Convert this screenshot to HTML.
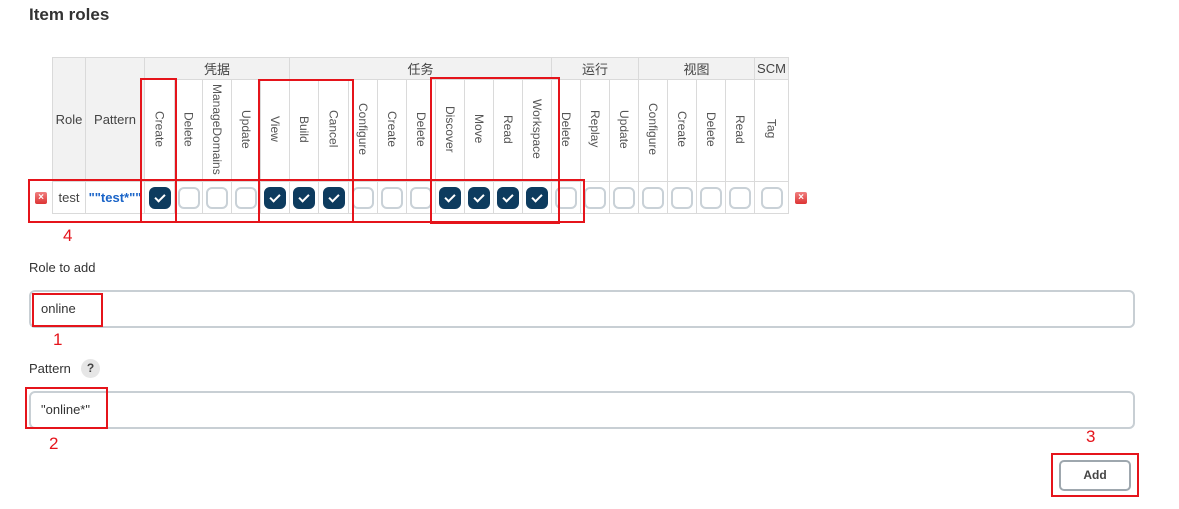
<!DOCTYPE html>
<html><head><meta charset="utf-8"><style>
body{margin:0;width:1179px;height:509px;background:#fff;font-family:"Liberation Sans","Noto Sans CJK SC",sans-serif;color:#333;position:relative;overflow:hidden}
.a{position:absolute}
h1{position:absolute;left:29px;top:5px;margin:0;font-size:17px;font-weight:bold;color:#333}
table{position:absolute;left:52px;top:57px;border-collapse:collapse;table-layout:fixed;font-size:13px;color:#444}
td{border:1px solid #dadada;padding:0;text-align:center;vertical-align:middle;overflow:hidden;white-space:nowrap}
.g{background:#f2f2f2;height:21px}
.rp{background:#f2f2f2}
.v{height:101px;background:#fff}
.v span{writing-mode:vertical-rl;display:inline-block;font-size:12px;color:#555}
.d td{height:31px}
.cb{display:inline-block;width:18px;height:18px;border:2px solid #c9d1d7;border-radius:6px;vertical-align:middle}
.cb.on{background:#0d3b5e;border-color:#0d3b5e;position:relative}
.cb.on:after{content:"";position:absolute;left:6px;top:3px;width:4px;height:8px;border:solid #fff;border-width:0 2px 2px 0;transform:rotate(45deg)}
.x{position:absolute;width:12px;height:12px;background:linear-gradient(#f08080,#d33);border-radius:2px;color:#fff;font-size:10px;line-height:12px;text-align:center;font-weight:bold}
.r{position:absolute;border:2px solid #e5141b;box-sizing:border-box}
.n{position:absolute;color:#e5141b;font-size:17px}
.lbl{position:absolute;left:29px;font-size:13px;color:#333}
.in{position:absolute;left:29px;width:1106px;height:38px;border:2px solid #c8cfd4;border-radius:6px;box-sizing:border-box;font-size:13px;line-height:34px;padding-left:10px;color:#333}
</style></head><body>
<h1>Item roles</h1>
<table>
<colgroup><col style="width:33px"><col style="width:59px"><col style="width:30px"><col style="width:28px"><col style="width:29px"><col style="width:29px"><col style="width:29px"><col style="width:29px"><col style="width:30px"><col style="width:29px"><col style="width:29px"><col style="width:29px"><col style="width:29px"><col style="width:29px"><col style="width:29px"><col style="width:29px"><col style="width:29px"><col style="width:29px"><col style="width:29px"><col style="width:29px"><col style="width:29px"><col style="width:29px"><col style="width:29px"><col style="width:34px"></colgroup>
<tr><td rowspan="2" class="rp">Role</td><td rowspan="2" class="rp">Pattern</td><td colspan="5" class="g">凭据</td><td colspan="9" class="g">任务</td><td colspan="3" class="g">运行</td><td colspan="4" class="g">视图</td><td class="g">SCM</td></tr>
<tr class="v"><td class="v"><span>Create</span></td><td class="v"><span>Delete</span></td><td class="v"><span>ManageDomains</span></td><td class="v"><span>Update</span></td><td class="v"><span>View</span></td><td class="v"><span>Build</span></td><td class="v"><span>Cancel</span></td><td class="v"><span>Configure</span></td><td class="v"><span>Create</span></td><td class="v"><span>Delete</span></td><td class="v"><span>Discover</span></td><td class="v"><span>Move</span></td><td class="v"><span>Read</span></td><td class="v"><span>Workspace</span></td><td class="v"><span>Delete</span></td><td class="v"><span>Replay</span></td><td class="v"><span>Update</span></td><td class="v"><span>Configure</span></td><td class="v"><span>Create</span></td><td class="v"><span>Delete</span></td><td class="v"><span>Read</span></td><td class="v"><span>Tag</span></td></tr>
<tr class="d"><td>test</td><td style="color:#1a64c8;font-weight:bold">""test*""</td>
<td><i class="cb on"></i></td><td><i class="cb"></i></td><td><i class="cb"></i></td><td><i class="cb"></i></td><td><i class="cb on"></i></td><td><i class="cb on"></i></td><td><i class="cb on"></i></td><td><i class="cb"></i></td><td><i class="cb"></i></td><td><i class="cb"></i></td><td><i class="cb on"></i></td><td><i class="cb on"></i></td><td><i class="cb on"></i></td><td><i class="cb on"></i></td><td><i class="cb"></i></td><td><i class="cb"></i></td><td><i class="cb"></i></td><td><i class="cb"></i></td><td><i class="cb"></i></td><td><i class="cb"></i></td><td><i class="cb"></i></td><td><i class="cb"></i></td></tr>
</table>
<div class="x" style="left:35px;top:192px">×</div>
<div class="x" style="left:795px;top:192px">×</div>
<div class="r" style="left:28px;top:179px;width:557px;height:44px"></div>
<div class="r" style="left:140px;top:78px;width:37px;height:145px"></div>
<div class="r" style="left:258px;top:79px;width:96px;height:144px"></div>
<div class="r" style="left:430px;top:77px;width:130px;height:147px"></div>
<div class="n" style="left:63px;top:226px">4</div>
<div class="lbl" style="top:260px">Role to add</div>
<div class="in" style="top:290px">online</div>
<div class="r" style="left:32px;top:293px;width:71px;height:34px"></div>
<div class="n" style="left:53px;top:330px">1</div>
<div class="lbl" style="top:361px">Pattern</div>
<div class="a" style="left:81px;top:359px;width:19px;height:19px;border-radius:50%;background:#e6e6e6;font-size:12px;font-weight:bold;text-align:center;line-height:19px;color:#444">?</div>
<div class="in" style="top:391px">"online*"</div>
<div class="r" style="left:25px;top:387px;width:83px;height:42px"></div>
<div class="n" style="left:49px;top:434px">2</div>
<div class="n" style="left:1086px;top:427px">3</div>
<div class="r" style="left:1051px;top:453px;width:88px;height:44px"></div>
<div class="a" style="left:1059px;top:460px;width:72px;height:31px;border:2px solid #9ea7ae;border-radius:5px;box-sizing:border-box;text-align:center;line-height:27px;font-size:12px;font-weight:bold;color:#444">Add</div>
</body></html>
